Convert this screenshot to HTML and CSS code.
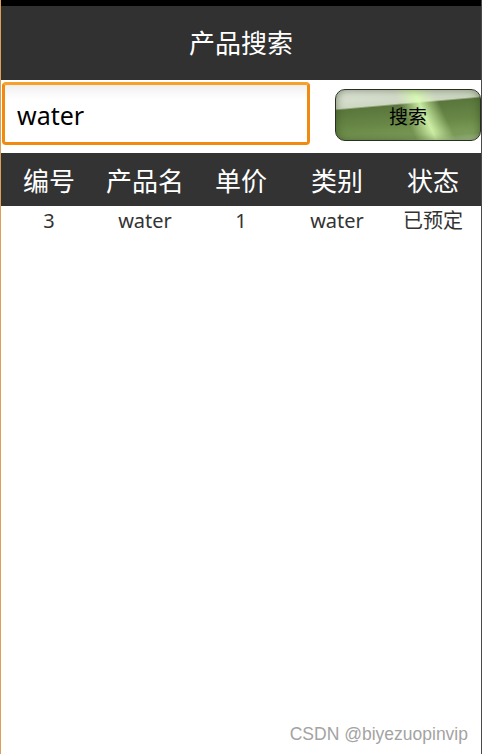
FILE: index.html
```html
<!DOCTYPE html>
<html lang="zh">
<head>
<meta charset="utf-8">
<title>产品搜索</title>
<link rel="stylesheet" href="styles.css">
</head>
<body>
<div class="screen">
  <div class="status"></div>
  <header class="titlebar">产品搜索</header>
  <div class="search">
    <input class="field" type="text" value="water">
    <button class="btn" type="button">搜索</button>
  </div>
  <div class="row head">
    <span>编号</span><span>产品名</span><span>单价</span><span>类别</span><span>状态</span>
  </div>
  <div class="row data">
    <span>3</span><span>water</span><span>1</span><span>water</span><span>已预定</span>
  </div>
  <div class="watermark">CSDN @biyezuopinvip</div>
</div>
</body>
</html>
```
FILE: styles.css
```css
html, body {
  margin: 0;
  padding: 0;
  background: #fff;
}
.screen {
  position: relative;
  width: 482px;
  height: 754px;
  box-sizing: border-box;
  border-left: 1px solid #d9a05a;
  border-right: 1px solid #4a4a4a;
  font-family: "Noto Sans", "Noto Sans CJK SC", sans-serif;
  overflow: hidden;
}
.status {
  height: 6px;
  background: #000;
  margin-left: -1px;
  margin-right: -1px;
}
.titlebar {
  height: 74px;
  background: #313131;
  color: #fff;
  font-size: 26px;
  display: flex;
  align-items: center;
  justify-content: center;
  padding-bottom: 2px;
  box-sizing: border-box;
}
.search {
  height: 73px;
  display: flex;
  align-items: flex-start;
  background: #fff;
}
.field {
  appearance: none;
  margin: 2px 0 0 1px;
  width: 308px;
  height: 63px;
  box-sizing: border-box;
  border: 3px solid #f38a10;
  border-top-color: #f7a02a;
  border-radius: 4px;
  background: linear-gradient(#f0f0f0, #fff 14px);
  font-family: "Noto Sans", "Noto Sans CJK SC", sans-serif;
  font-size: 25px;
  color: #000;
  padding: 2px 0 0 12px;
  outline: none;
}
.btn {
  margin: 9px 0 0 25px;
  width: 146px;
  height: 52px;
  box-sizing: border-box;
  border: 1px solid #2a3020;
  border-radius: 10px;
  font-family: "Noto Sans", "Noto Sans CJK SC", sans-serif;
  font-size: 19px;
  color: #000;
  padding: 2px 0 0 0;
  background:
    linear-gradient(65deg, rgba(220,255,180,0) 48%, rgba(220,255,180,0.85) 60%, rgba(220,255,180,0) 72%),
    linear-gradient(175deg, #e2e6dc 0%, #cdd7c2 30%, #5a763c 33%, #6a8a48 65%, #7f9f5c 88%, #b8d0a2 100%);
  box-shadow: inset 0 0 9px rgba(40,60,20,0.55);
}
.row {
  display: grid;
  grid-template-columns: repeat(5, 1fr);
  text-align: center;
}
.head {
  height: 53px;
  background: #333;
  color: #fff;
  font-size: 26px;
  align-items: center;
}
.data {
  color: #333;
  font-size: 20px;
  padding-top: 1px;
  line-height: 28px;
}
.watermark {
  position: absolute;
  right: 13px;
  bottom: 9px;
  font-family: "Liberation Sans", Arial, sans-serif;
  font-size: 17.5px;
  color: #a3a3a3;
}
```
